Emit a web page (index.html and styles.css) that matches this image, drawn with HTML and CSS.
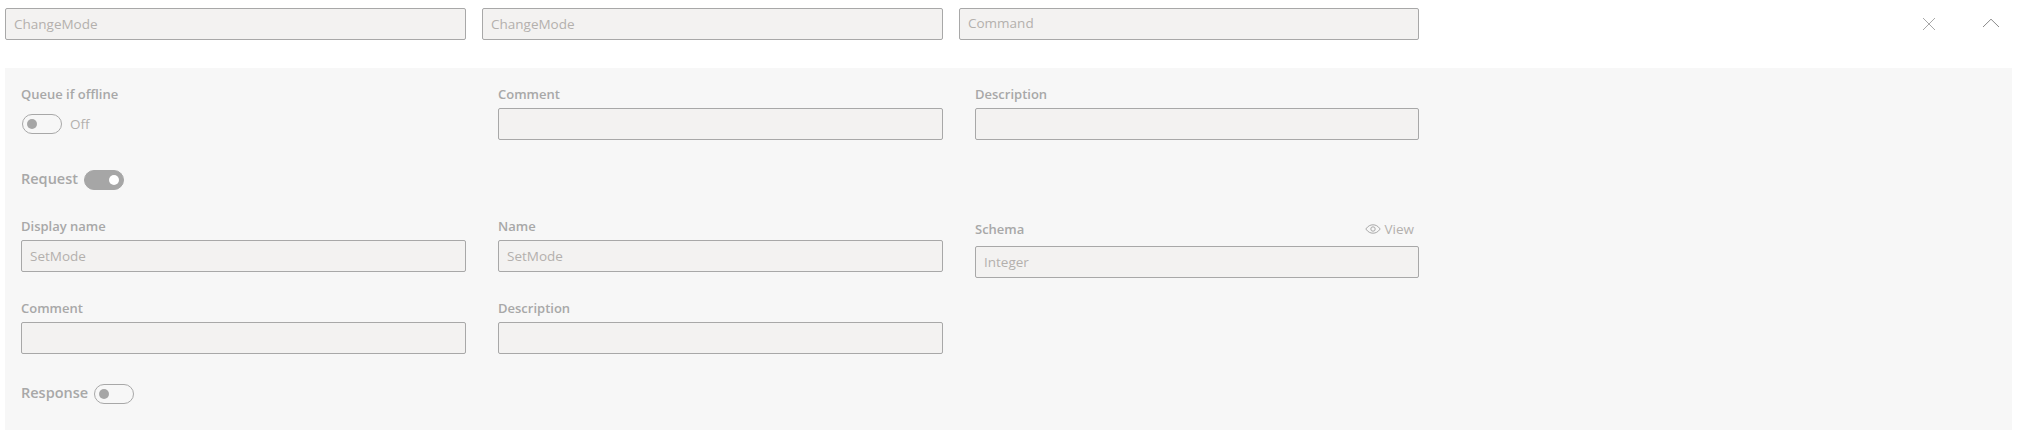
FILE: index.html
```html
<!DOCTYPE html>
<html lang="en">
<head>
<meta charset="utf-8">
<title>ChangeMode</title>
<link rel="stylesheet" href="styles.css">
</head>
<body>
<header class="head">
  <div class="head-fields">
    <div class="box">ChangeMode</div>
    <div class="box">ChangeMode</div>
    <div class="box box-command">Command</div>
  </div>
  <div class="head-icons">
    <svg class="icon-x" width="14" height="14" viewBox="0 0 14 14"><path d="M1 1L13 13M13 1L1 13"/></svg>
    <svg class="icon-up" width="18" height="10" viewBox="0 0 18 10"><path d="M1 9L9 1.2L17 9"/></svg>
  </div>
</header>
<main class="panel">
  <div class="grid grid-first">
    <div class="field">
      <div class="label">Queue if offline</div>
      <div class="toggle-line">
        <span class="toggle"><span class="knob"></span></span>
        <span class="state">Off</span>
      </div>
    </div>
    <div class="field">
      <div class="label">Comment</div>
      <div class="box"></div>
    </div>
    <div class="field">
      <div class="label">Description</div>
      <div class="box"></div>
    </div>
  </div>
  <div class="section section-request">
    <span class="section-name">Request</span>
    <span class="toggle toggle-on"><span class="knob"></span></span>
  </div>
  <div class="grid grid-request">
    <div class="field">
      <div class="label">Display name</div>
      <div class="box">SetMode</div>
    </div>
    <div class="field">
      <div class="label">Name</div>
      <div class="box">SetMode</div>
    </div>
    <div class="field field-schema">
      <div class="label-row">
        <div class="label">Schema</div>
        <div class="view">
          <svg width="16" height="10" viewBox="0 0 16 10"><path d="M0.8 5C3 2 5.3 0.8 8 0.8S13 2 15.2 5C13 8 10.7 9.2 8 9.2S3 8 0.8 5Z"/><circle cx="8" cy="5" r="2.2"/></svg>
          <span>View</span>
        </div>
      </div>
      <div class="box">Integer</div>
    </div>
  </div>
  <div class="grid grid-comments">
    <div class="field">
      <div class="label">Comment</div>
      <div class="box"></div>
    </div>
    <div class="field">
      <div class="label">Description</div>
      <div class="box"></div>
    </div>
  </div>
  <div class="section section-response">
    <span class="section-name">Response</span>
    <span class="toggle"><span class="knob"></span></span>
  </div>
</main>
</body>
</html>
```
FILE: styles.css
```css
* { box-sizing: border-box; }
html, body { margin: 0; padding: 0; background: #fff; }
body {
  width: 2024px;
  height: 446px;
  overflow: hidden;
  font-family: "Open Sans", "Noto Sans", sans-serif;
  font-size: 13px;
  color: #a6a6a6;
}
.head {
  display: flex;
  align-items: flex-start;
  padding: 8px 0 0 5px;
  height: 68px;
}
.head-fields {
  display: grid;
  grid-template-columns: 461px 461px 460px;
  column-gap: 16px;
}
.head-icons {
  display: flex;
  align-items: flex-start;
  margin-left: 503px;
  padding-top: 9px;
}
.icon-x path { fill: none; stroke: #a8a8a8; stroke-width: 1; }
.icon-up { margin: 1px 0 0 46px; }
.icon-up path { fill: none; stroke: #8a8a8a; stroke-width: 1; }
.box {
  height: 32px;
  padding: 0 8px;
  line-height: 31px;
  background: #f3f2f1;
  border: 1px solid #a8a8a8;
  border-radius: 2px;
  color: #b3b0ad;
  font-size: 13.5px;
}
.box-command { line-height: 29px; }
.panel {
  width: 2007px;
  height: 362px;
  margin-left: 5px;
  padding: 16px 16px 0;
  background: #f7f7f7;
}
.grid {
  display: grid;
  grid-template-columns: 445px 445px 444px;
  column-gap: 32px;
}
.label {
  height: 24px;
  line-height: 20px;
  font-weight: 600;
  font-size: 13px;
  color: #a8a8a8;
}
.label-row {
  display: flex;
  justify-content: space-between;
  height: 30px;
  padding-right: 5px;
  padding-top: 3px;
}
.view {
  display: flex;
  align-items: flex-start;
  gap: 4px;
  line-height: 20px;
  color: #b3b0ad;
  font-size: 13.5px;
}
.view svg { margin-top: 5px; fill: none; stroke: #a8a8a8; stroke-width: 1; }
.toggle-line {
  display: flex;
  align-items: center;
  height: 20px;
  margin-top: 6px;
  padding-left: 1px;
  gap: 8px;
}
.state { color: #b3b0ad; font-size: 13.5px; }
.toggle {
  display: inline-flex;
  align-items: center;
  flex: none;
  width: 40px;
  height: 20px;
  padding: 0 4px;
  border: 1px solid #a8a8a8;
  border-radius: 10px;
}
.knob {
  width: 10px;
  height: 10px;
  border-radius: 50%;
  background: #a6a6a6;
}
.toggle-on {
  justify-content: flex-end;
  background: #a6a6a6;
  border-color: #a6a6a6;
}
.toggle-on .knob { background: #fff; }
.section {
  display: flex;
  align-items: center;
  height: 20px;
  gap: 6px;
}
.section-name {
  font-size: 14.5px;
  line-height: 18px;
  margin-top: -3px;
  font-weight: 600;
  color: #a8a8a8;
}
.section-request { margin-top: 30px; }
.grid-request { margin-top: 26px; }
.grid-comments { margin-top: 20px; }
.section-response { margin-top: 30px; }
```
